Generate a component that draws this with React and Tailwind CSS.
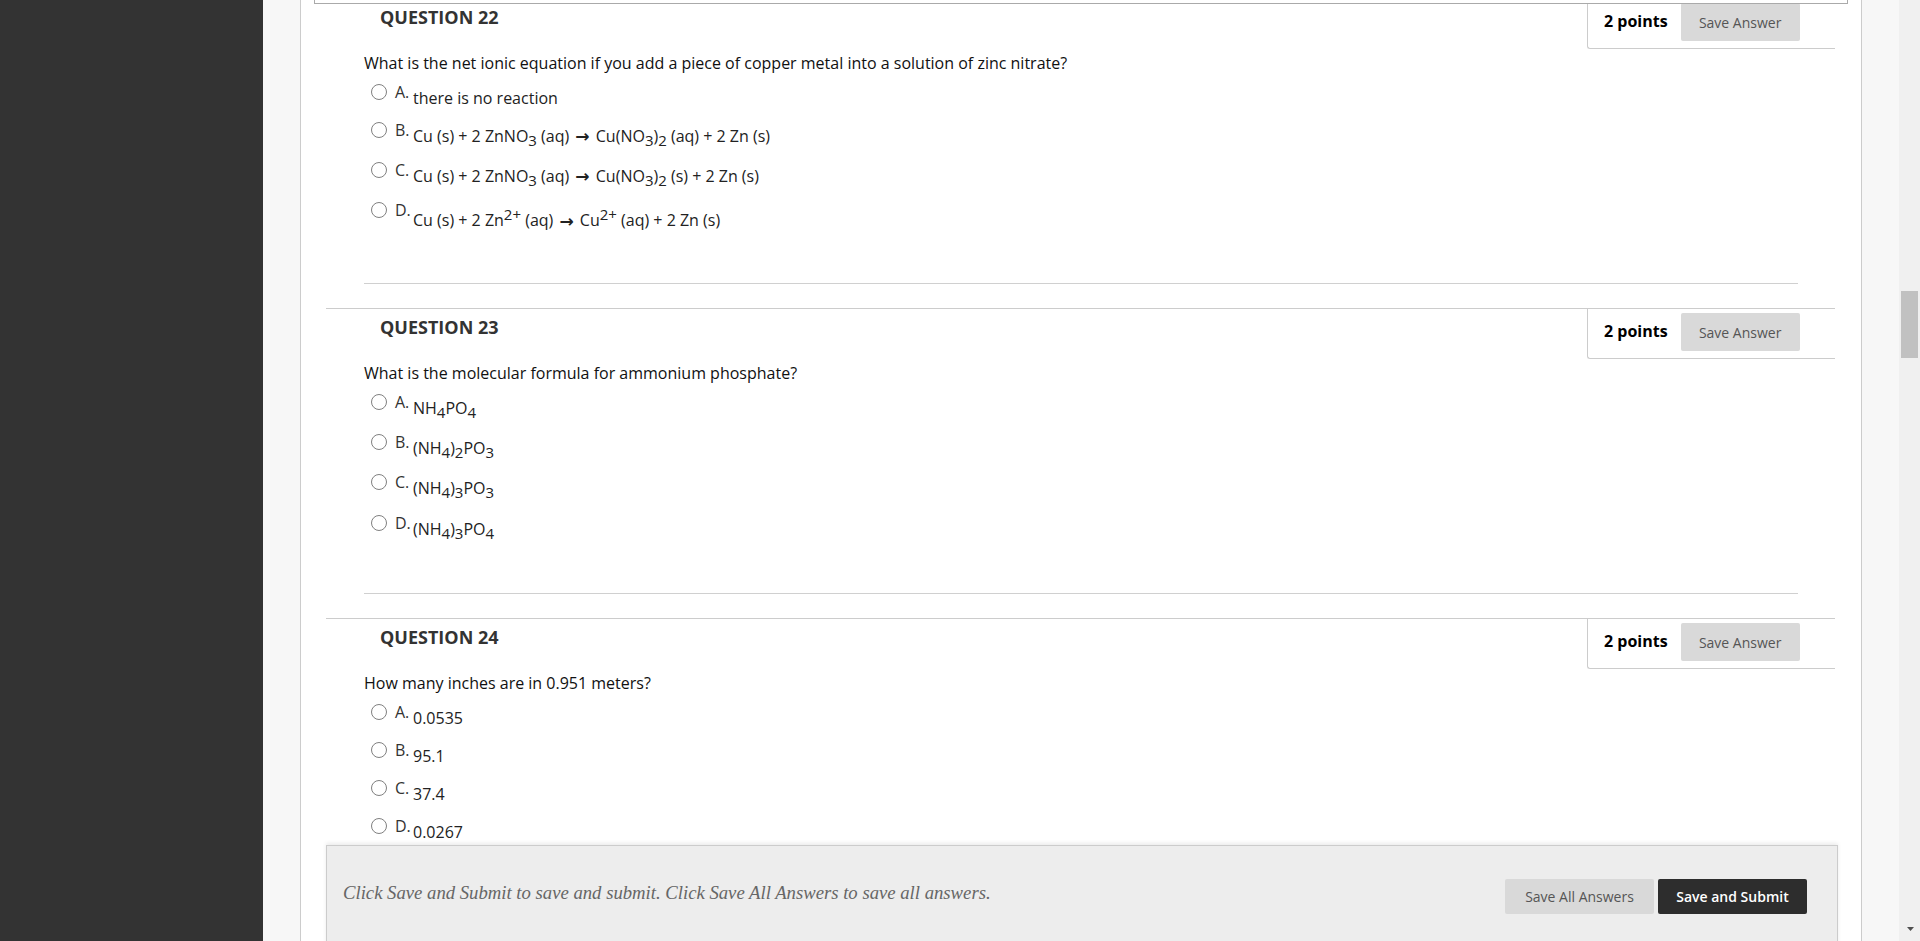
import React from "react";

const Sub = ({ children }) => (
  <span className="align-sub text-[15px] leading-[20px]">{children}</span>
);
const Sup = ({ children }) => (
  <span className="align-super text-[15px] leading-[20px]">{children}</span>
);
const Arrow = () => (
  <span className="px-[2px] font-['DejaVu_Sans',sans-serif] text-[17px] font-bold leading-[20px]">→</span>
);

const questions = [
  {
    num: 22,
    text: "What is the net ionic equation if you add a piece of copper metal into a solution of zinc nitrate?",
    answers: [
      <>there is no reaction</>,
      <>
        Cu (s) + 2 ZnNO<Sub>3</Sub> (aq) <Arrow /> Cu(NO<Sub>3</Sub>)<Sub>2</Sub> (aq) + 2 Zn (s)
      </>,
      <>
        Cu (s) + 2 ZnNO<Sub>3</Sub> (aq) <Arrow /> Cu(NO<Sub>3</Sub>)<Sub>2</Sub> (s) + 2 Zn (s)
      </>,
      <>
        Cu (s) + 2 Zn<Sup>2+</Sup> (aq) <Arrow /> Cu<Sup>2+</Sup> (aq) + 2 Zn (s)
      </>,
    ],
  },
  {
    num: 23,
    text: "What is the molecular formula for ammonium phosphate?",
    answers: [
      <>
        NH<Sub>4</Sub>PO<Sub>4</Sub>
      </>,
      <>
        (NH<Sub>4</Sub>)<Sub>2</Sub>PO<Sub>3</Sub>
      </>,
      <>
        (NH<Sub>4</Sub>)<Sub>3</Sub>PO<Sub>3</Sub>
      </>,
      <>
        (NH<Sub>4</Sub>)<Sub>3</Sub>PO<Sub>4</Sub>
      </>,
    ],
  },
  {
    num: 24,
    text: "How many inches are in 0.951 meters?",
    answers: [<>0.0535</>, <>95.1</>, <>37.4</>, <>0.0267</>],
  },
];

const letters = ["A.", "B.", "C.", "D."];

const Question = ({ q }) => {
  return (
    <div className="ml-[25px] mr-[26px] border-t border-[#cccccc]">
      {/* header */}
      <div className="flex h-[50px] items-start justify-between">
        <h3 className="ml-[54px] mt-[6px] text-[18px] font-bold leading-[24px] text-[#333]">
          QUESTION {q.num}
        </h3>
        <div className="flex h-[50px] w-[248px] items-start rounded-bl-[3px] border-b border-l border-[#cccccc] pl-[16px]">
          <span className="mt-[10px] text-[16px] font-bold leading-[24px] text-black">
            2 points
          </span>
          <button className="ml-[13px] mt-[4px] h-[38px] w-[119px] rounded-[2px] bg-[#d9d9d9] text-[14px] text-[#555]">
            Save Answer
          </button>
        </div>
      </div>

      {/* body */}
      <div className="h-[232px]">
        <p className="ml-[38px] mt-[2px] text-[16px] leading-[24px] text-[#111]">
          {q.text}
        </p>
        <ul className="ml-[45px] mt-[5px]">
          {q.answers.map((a, i) => (
            <li key={i} className="mb-[8px] flex items-start">
              <span className="mt-[4px] h-[16px] w-[16px] shrink-0 rounded-full border-[1.5px] border-[#808080] bg-white" />
              <span className="ml-[8px] w-[18px] shrink-0 text-[16px] leading-[24px] text-[#333]">
                {letters[i]}
              </span>
              <span className="pt-[6px] text-[16px] leading-[24px] text-[#222]">
                {a}
              </span>
            </li>
          ))}
        </ul>
      </div>
      <div className="ml-[38px] mr-[37px] h-px bg-[#d0d0d0]" />
      <div className="h-[24px]" />
    </div>
  );
};

const App = () => {
  return (
    <div className="flex h-[941px] w-full overflow-hidden bg-[#f7f7f7] font-['Open_Sans',sans-serif]">
      {/* left nav */}
      <div className="w-[263px] shrink-0 bg-[#333333]" />

      {/* main */}
      <div className="flex flex-1 bg-[#f7f7f7] px-[37px]">
        <div className="relative h-[941px] w-[1562px] overflow-hidden border-x border-[#cccccc] bg-white">
          {/* box above, scrolled mostly out of view */}
          <div className="absolute left-[13px] right-[13px] top-[-10px] h-[14px] border-x border-b border-[#aaaaaa] bg-white" />

          <div className="-mt-[2px]">
            {questions.map((q) => (
              <Question key={q.num} q={q} />
            ))}
          </div>

          {/* submit bar */}
          <div className="absolute left-[25px] right-[23px] top-[845px] flex h-[110px] items-start justify-between border border-[#cccccc] bg-[#ededed] shadow-[0_-2px_4px_rgba(0,0,0,0.08)]">
            <p className="pl-[16px] pt-[35px] font-['Liberation_Serif',serif] text-[18.7px] italic leading-[24px] text-[#666]">
              Click Save and Submit to save and submit. Click Save All Answers to save all answers.
            </p>
            <div className="flex gap-[4px] pr-[30px] pt-[33px]">
              <button className="h-[35px] w-[149px] rounded-[2px] bg-[#d9d9d9] text-[14px] text-[#555]">
                Save All Answers
              </button>
              <button className="h-[35px] w-[149px] rounded-[2px] bg-[#2d2d2d] text-[14px] font-semibold text-white">
                Save and Submit
              </button>
            </div>
          </div>
        </div>
      </div>

      {/* scrollbar */}
      <div className="relative w-[21px] shrink-0 bg-[#f0f0f0]">
        <div className="absolute left-[2px] top-[291px] h-[67px] w-[17px] bg-[#c1c1c1]" />
        <svg
          className="absolute bottom-[10px] left-[8px]"
          width="7"
          height="4"
          viewBox="0 0 7 4"
        >
          <polygon points="0,0 7,0 3.5,4" fill="#505050" />
        </svg>
      </div>
    </div>
  );
};

export default App;
